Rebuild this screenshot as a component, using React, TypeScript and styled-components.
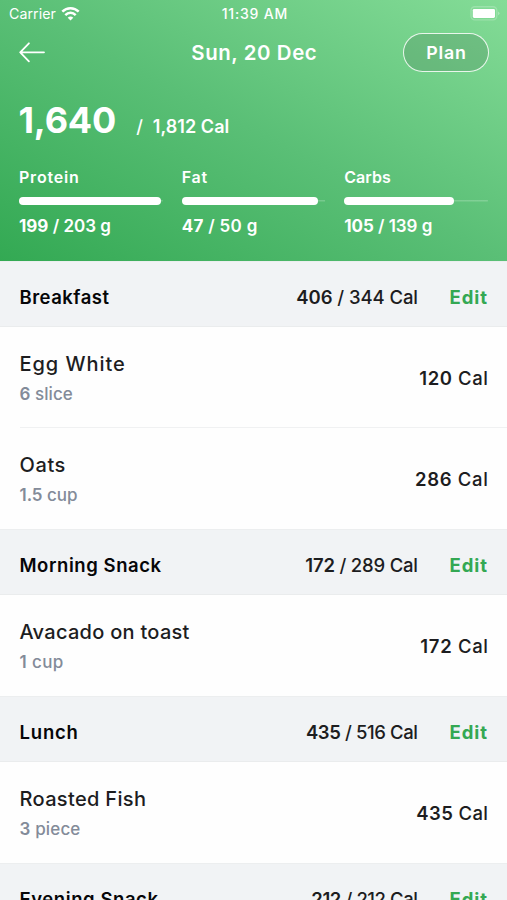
import React from 'react';
import styled, { createGlobalStyle } from 'styled-components';

const Global = createGlobalStyle`
  * { box-sizing: border-box; }
  body { margin: 0; background: #fff; overflow: hidden; }
`;

const Screen = styled.div`
  width: 507px;
  height: 900px;
  overflow: hidden;
  background: #fefefe;
  font-family: Inter, "Liberation Sans", sans-serif;
  color: #1d1d1f;
`;

const Header = styled.header`
  height: 261px;
  background: linear-gradient(to top right, #33a953 0%, #5abf76 50%, #84dc97 100%);
  color: #fff;
`;

const Label = styled.span<{ $size: number; $weight?: number; $track?: number; $line?: number }>`
  font-size: ${(p) => p.$size}px;
  font-weight: ${(p) => p.$weight ?? 450};
  letter-spacing: ${(p) => p.$track ?? 0}px;
  line-height: ${(p) => p.$line ?? 24}px;
  margin-right: ${(p) => -(p.$track ?? 0)}px;
  white-space: pre;
`;

const Strong = styled.b<{ $weight?: number }>`
  font-weight: ${(p) => p.$weight ?? 600};
`;

const StatusBar = styled.div`
  display: grid;
  grid-template-columns: 1fr auto 1fr;
  align-items: center;
  height: 27px;
  padding: 0 7px 0 9px;
`;

const Carrier = styled.div`
  display: flex;
  align-items: center;
  gap: 5px;
`;

const BatteryBox = styled.div`
  display: flex;
  justify-content: flex-end;
`;

const NavBar = styled.nav`
  display: grid;
  grid-template-columns: 1fr auto 1fr;
  align-items: center;
  height: 51px;
  padding: 0 18px 0 19px;
`;

const BackButton = styled.button`
  display: flex;
  width: 27px;
  padding: 0;
  border: 0;
  background: none;
`;

const PlanButton = styled.button`
  justify-self: end;
  display: flex;
  align-items: center;
  justify-content: center;
  width: 86px;
  height: 39.5px;
  padding: 0;
  border: 1.5px solid rgba(255, 255, 255, 0.85);
  border-radius: 20px;
  background: rgba(75, 125, 90, 0.27);
  color: #fff;
  font-family: inherit;
`;

const Totals = styled.div`
  display: flex;
  align-items: baseline;
  height: 44px;
  margin-top: 20px;
  padding-left: 18.5px;
`;

const Slash = styled.span`
  width: 36.5px;
  padding-left: 20px;
  font-size: 18px;
  font-weight: 500;
`;

const Macros = styled.div`
  display: grid;
  grid-template-columns: repeat(3, 1fr);
  gap: 19px;
  margin-top: 25px;
  padding: 0 19px;
`;

const Macro = styled.div`
  display: flex;
  flex-direction: column;
`;

const Track = styled.div`
  display: flex;
  align-items: center;
  height: 8px;
  margin: 10px 0 11px;
  background: linear-gradient(rgba(255, 255, 255, 0.2), rgba(255, 255, 255, 0.2)) center / 100% 1.5px no-repeat;
`;

const Fill = styled.div`
  height: 8px;
  border-radius: 4px;
  background: #fff;
`;

const SectionBar = styled.div`
  display: grid;
  grid-template-columns: 1fr auto 70px;
  align-items: center;
  height: 66px;
  padding: 6px 19px 0 19.5px;
  border-top: 1px solid #eceeef;
  border-bottom: 1px solid #eaeced;
  background: #f1f3f5;
`;

const SectionTitle = styled.div`
  display: flex;
  color: #060608;
`;

const EditLink = styled.a`
  display: flex;
  justify-content: flex-end;
  padding-right: 1px;
  color: #34a853;
`;

const Item = styled.div`
  display: flex;
  justify-content: space-between;
  align-items: center;
  height: 101px;
  margin-left: 19.5px;
  padding-right: 19px;
  & + & { box-shadow: 0 -1px 0 #f0f1f2; }
`;

const ItemText = styled.div`
  display: flex;
  flex-direction: column;
  gap: 6px;
  padding-top: 2px;
`;

const Serving = styled.div`
  display: flex;
  color: #838b99;
`;

type Food = { name: string; nameTrack: number; qty: string; unit: string; unitTrack: number; cal: string; calTrack: number };
type Meal = { title: string; track: number; eaten: string; goal: string; calTrack: number; foods: Food[] };

const macros = [
  { name: 'Protein', nameTrack: 0.8, eaten: 199, goal: 203, track: 0 },
  { name: 'Fat', nameTrack: 0.8, eaten: 47, goal: 50, track: 0.3 },
  { name: 'Carbs', nameTrack: 0, eaten: 105, goal: 139, track: -0.05 },
];

const meals: Meal[] = [
  {
    title: 'Breakfast', track: 0.49, eaten: '406', goal: '344', calTrack: -0.08,
    foods: [
      { name: 'Egg White', nameTrack: 0.96, qty: '6', unit: 'slice', unitTrack: 0.05, cal: '120', calTrack: 0.57 },
      { name: 'Oats', nameTrack: 0.6, qty: '1.5', unit: 'cup', unitTrack: -0.04, cal: '286', calTrack: 0.7 },
    ],
  },
  {
    title: 'Morning Snack', track: 0.56, eaten: '172', goal: '289', calTrack: -0.2,
    foods: [{ name: 'Avacado on toast', nameTrack: 0.28, qty: '1', unit: 'cup', unitTrack: 0.4, cal: '172', calTrack: 0.66 }],
  },
  {
    title: 'Lunch', track: 0.8, eaten: '435', goal: '516', calTrack: -0.4,
    foods: [{ name: 'Roasted Fish', nameTrack: 0.34, qty: '3', unit: 'piece', unitTrack: 0.15, cal: '435', calTrack: 0.38 }],
  },
  { title: 'Evening Snack', track: 0.57, eaten: '212', goal: '212', calTrack: -0.42, foods: [] },
];

const WifiIcon = () => (
  <svg width="19" height="14" viewBox="0 0 19 14" fill="none" stroke="#fff" strokeWidth="2.5">
    <path d="M1.3 4.7C5.9 0.1 13.1 0.1 17.7 4.7" />
    <path d="M4.3 8.1C7.3 5.1 11.7 5.1 14.7 8.1" />
    <path d="M6.7 10.7C8.4 9.1 10.6 9.1 12.3 10.7L9.5 13.5Z" fill="#fff" stroke="none" />
  </svg>
);

const BatteryIcon = () => (
  <svg width="30" height="15" viewBox="0 0 30 15" fill="none">
    <rect x="1" y="0.7" width="25.8" height="13.2" rx="3.8" stroke="#fff" strokeOpacity="0.22" strokeWidth="1.4" />
    <rect x="2.8" y="2.9" width="22.2" height="9" rx="1.4" fill="#fff" />
    <path d="M28 5.4Q29.5 6 29.5 7.3T28 9.2Z" fill="#fff" fillOpacity="0.3" />
  </svg>
);

const BackIcon = () => (
  <svg width="27" height="21" viewBox="0 0 27 21" fill="none" stroke="#fff" strokeWidth="1.8" strokeLinecap="round" strokeLinejoin="round">
    <path d="M25 10.3H1.2M9.9 1.3L1.2 10.3L9.9 19.3" />
  </svg>
);

export default function App() {
  return (
    <Screen>
      <Global />
      <Header>
        <StatusBar>
          <Carrier>
            <Label $size={14.2} $weight={400} $track={0.05}>Carrier</Label>
            <WifiIcon />
          </Carrier>
          <Label $size={14} $weight={500} $track={0.8}>11:39 AM</Label>
          <BatteryBox><BatteryIcon /></BatteryBox>
        </StatusBar>
        <NavBar>
          <BackButton aria-label="Back"><BackIcon /></BackButton>
          <Label $size={20.4} $weight={600} $track={0.6}>Sun, 20 Dec</Label>
          <PlanButton><Label $size={17.8} $weight={600} $track={0.8}>Plan</Label></PlanButton>
        </NavBar>
        <Totals>
          <Label $size={36} $weight={700} $track={-0.18} $line={44}>1,640</Label>
          <Slash>/</Slash>
          <Label $size={18} $weight={600} $track={0.05}>1,812 Cal</Label>
        </Totals>
        <Macros>
          {macros.map((m) => (
            <Macro key={m.name}>
              <Label $size={16} $weight={600} $track={m.nameTrack} $line={20}>{m.name}</Label>
              <Track><Fill style={{ width: `${Math.min(100, (m.eaten / m.goal) * 100 + 0.7)}%` }} /></Track>
              <Label $size={17} $weight={600} $track={m.track} $line={21}>
                <Strong $weight={700}>{m.eaten}</Strong>{` / ${m.goal} g`}
              </Label>
            </Macro>
          ))}
        </Macros>
      </Header>
      {meals.map((meal) => (
        <section key={meal.title}>
          <SectionBar>
            <SectionTitle><Label $size={18.5} $weight={600} $track={meal.track}>{meal.title}</Label></SectionTitle>
            <Label $size={18.5} $track={meal.calTrack}>
              <Strong>{meal.eaten}</Strong>{` / ${meal.goal} Cal`}
            </Label>
            <EditLink><Label $size={18.5} $weight={700} $track={0.9}>Edit</Label></EditLink>
          </SectionBar>
          {meal.foods.map((food) => (
            <Item key={food.name}>
              <ItemText>
                <Label $size={20} $track={food.nameTrack}>{food.name}</Label>
                <Serving>
                  <Label $size={17} $track={food.unitTrack}><Strong>{food.qty}</Strong>{` ${food.unit}`}</Label>
                </Serving>
              </ItemText>
              <Label $size={18.5} $track={food.calTrack}><Strong>{food.cal}</Strong> Cal</Label>
            </Item>
          ))}
        </section>
      ))}
    </Screen>
  );
}
